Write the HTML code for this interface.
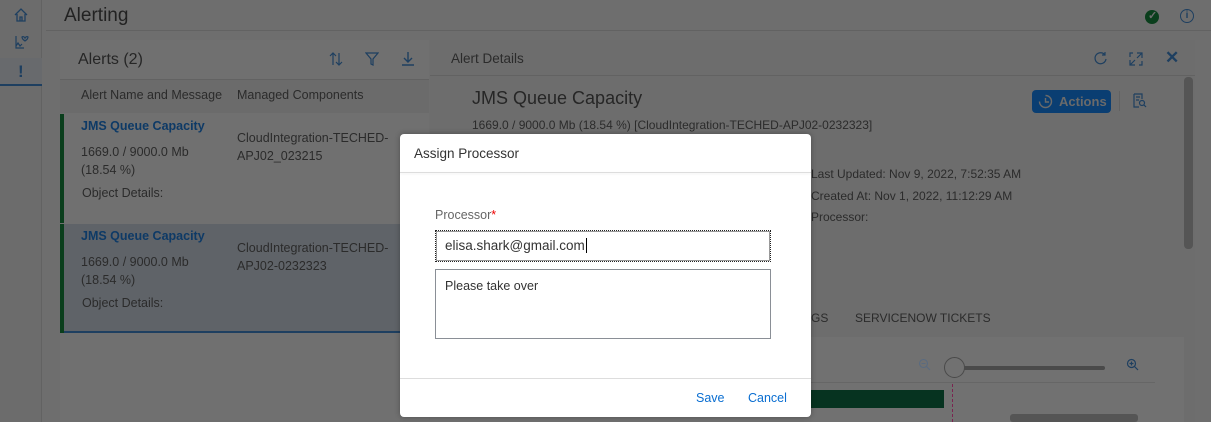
<!DOCTYPE html>
<html><head><meta charset="utf-8"><style>
*{box-sizing:border-box;margin:0;padding:0}
body{width:1211px;height:422px;overflow:hidden;background:#6e6e6e;font-family:"Liberation Sans",sans-serif;color:#2b2b2b;position:relative;font-size:12.5px}
.a{position:absolute}
.link{color:#0e3a66;font-weight:bold;font-size:12.5px}
</style></head><body>
<div class="a" style="left:0;top:0;width:42px;height:422px;background:#6c6c6c;border-right:1px solid #626262"></div>
<div class="a" style="left:0;top:58px;width:42px;height:28px;background:#686a6d;border-bottom:2px solid #1e3f60"></div>
<svg class="a" style="left:13px;top:7px" width="16" height="16" viewBox="0 0 16 16"><path d="M2 8 L8 2 L14 8 M4 7 V14 H12 V7 M7 14 V10 H9 V14" fill="none" stroke="#1e3f60" stroke-width="1.3"/></svg>
<svg class="a" style="left:13px;top:34px" width="16" height="16" viewBox="0 0 16 16"><path d="M3 2 V14 H11 M3 12 L5 9 L7 12 L9 10 M9 3 a2 2 0 0 1 3 1 a2 2 0 0 1 3 -1 c0 2 -3 4 -3 4 c0 0 -3 -2 -3 -4z" fill="none" stroke="#1e3f60" stroke-width="1.2"/></svg>
<div class="a" style="left:18px;top:62px;color:#1e3f60;font-size:17px;font-weight:bold">!</div>
<div class="a" style="left:64px;top:5px;font-size:19px;color:#222">Alerting</div>
<div class="a" style="left:46px;top:30px;width:1165px;height:1px;background:#626262"></div>
<div class="a" style="left:1145px;top:10px;width:14px;height:14px;border-radius:50%;background:#0a3e1c"></div>
<div class="a" style="left:1148px;top:9px;color:#6e6e6e;font-size:11px;font-weight:bold">✓</div>
<div class="a" style="left:1180px;top:9px;width:14px;height:14px;border-radius:50%;border:1.5px solid #1e3f60;color:#1e3f60;font-size:10px;text-align:center;line-height:11px;font-weight:bold">i</div>
<div class="a" style="left:60px;top:40px;width:369px;height:380px;background:#707070"></div>
<div class="a" style="left:78px;top:51px;font-size:16px;color:#262626">Alerts (2)</div>
<svg class="a" style="left:328px;top:51px" width="16" height="16" viewBox="0 0 16 16"><path d="M5 14 V2 M2 5 L5 2 L8 5 M11 2 V14 M8 11 L11 14 L14 11" fill="none" stroke="#1e3f60" stroke-width="1.2"/></svg>
<svg class="a" style="left:365px;top:52px" width="14" height="14" viewBox="0 0 14 14"><path d="M1 1 H13 L8 7 V13 L6 12 V7 Z" fill="none" stroke="#1e3f60" stroke-width="1.2"/></svg>
<svg class="a" style="left:401px;top:51px" width="14" height="16" viewBox="0 0 14 16"><path d="M7 1 V11 M3 7 L7 11 L11 7 M1 14 H13" fill="none" stroke="#1e3f60" stroke-width="1.4"/></svg>
<div class="a" style="left:60px;top:79px;width:369px;height:1px;background:#626262"></div>
<div class="a" style="left:60px;top:80px;width:369px;height:33px;background:#6b6b6b"></div>
<div class="a" style="left:81px;top:88px">Alert Name and Message</div>
<div class="a" style="left:237px;top:88px">Managed Components</div>
<div class="a" style="left:60px;top:114px;width:4px;height:109px;background:#0a3e1c"></div>
<div class="a link" style="left:81px;top:119px">JMS Queue Capacity</div>
<div class="a" style="left:81px;top:143px;line-height:18px">1669.0 / 9000.0 Mb<br>(18.54 %)</div>
<div class="a" style="left:82px;top:186px">Object Details:</div>
<div class="a" style="left:237px;top:129px;line-height:18px">CloudIntegration-TECHED-<br>APJ02_023215</div>
<div class="a" style="left:60px;top:224px;width:369px;height:109px;background:#5f6368;border-bottom:2px solid #1e3f60"></div>
<div class="a" style="left:60px;top:224px;width:4px;height:109px;background:#0a3e1c"></div>
<div class="a link" style="left:81px;top:229px">JMS Queue Capacity</div>
<div class="a" style="left:81px;top:253px;line-height:18px">1669.0 / 9000.0 Mb<br>(18.54 %)</div>
<div class="a" style="left:82px;top:296px">Object Details:</div>
<div class="a" style="left:237px;top:239px;line-height:18px">CloudIntegration-TECHED-<br>APJ02-0232323</div>
<div class="a" style="left:430px;top:40px;width:765px;height:382px;background:#6d6d6d"></div>
<div class="a" style="left:451px;top:51px;font-size:13.5px">Alert Details</div>
<svg class="a" style="left:1093px;top:51px" width="15" height="15" viewBox="0 0 15 15"><path d="M12 4 A5.5 5.5 0 1 0 13 8 M12 1 V4 H9" fill="none" stroke="#1e3f60" stroke-width="1.2"/></svg>
<svg class="a" style="left:1129px;top:52px" width="14" height="14" viewBox="0 0 14 14"><path d="M8 1 H13 V6 M13 1 L8 6 M6 13 H1 V8 M1 13 L6 8 M1 5 V1 H4 M13 9 V13 H10" fill="none" stroke="#1e3f60" stroke-width="1.2"/></svg>
<div class="a" style="left:1165px;top:48px;color:#1e3f60;font-size:17px;font-weight:bold">✕</div>
<div class="a" style="left:430px;top:75px;width:765px;height:1px;background:#626262"></div>
<div class="a" style="left:472px;top:88px;font-size:18px;color:#262626">JMS Queue Capacity</div>
<div class="a" style="left:472px;top:118px;font-size:12px">1669.0 / 9000.0 Mb (18.54 %) [CloudIntegration-TECHED-APJ02-0232323]</div>
<div class="a" style="left:1032px;top:90px;width:79px;height:23px;background:#0a3e72;border-radius:4px;color:#6a6a6a;font-weight:bold;font-size:13px;line-height:23px;padding-left:27px">Actions</div>
<svg class="a" style="left:1038px;top:94px" width="15" height="15" viewBox="0 0 15 15"><path d="M7.5 1.5 A6 6 0 1 1 1.5 7.5 M7.5 4 V8 H11" fill="none" stroke="#6a6a6a" stroke-width="1.4"/></svg>
<div class="a" style="left:1119px;top:91px;width:1px;height:20px;background:#626262"></div>
<svg class="a" style="left:1133px;top:93px" width="14" height="16" viewBox="0 0 14 16"><path d="M1 1 H9 V6 M1 1 V14 H6 M3 4 H7 M3 7 H6" fill="none" stroke="#1e3f60" stroke-width="1.2"/><circle cx="9" cy="10" r="2.5" fill="none" stroke="#1e3f60" stroke-width="1.2"/><path d="M11 12 L13 14" stroke="#1e3f60" stroke-width="1.2"/></svg>
<div class="a" style="left:811px;top:164px;line-height:21.5px;font-size:12px">Last Updated: Nov 9, 2022, 7:52:35 AM<br>Created At: Nov 1, 2022, 11:12:29 AM<br>Processor:</div>
<div class="a" style="left:811px;top:311px;font-size:12px">GS</div>
<div class="a" style="left:855px;top:311px;font-size:12px">SERVICENOW TICKETS</div>
<div class="a" style="left:430px;top:337px;width:754px;height:85px;background:#717171"></div>
<svg class="a" style="left:918px;top:358px" width="14" height="14" viewBox="0 0 14 14"><circle cx="5.5" cy="5.5" r="4" fill="none" stroke="#5a6b80" stroke-width="1.1"/><path d="M3.5 5.5 H7.5 M8.5 8.5 L12 12" stroke="#5a6b80" stroke-width="1.1"/></svg>
<div class="a" style="left:955px;top:366px;width:150px;height:4px;background:#4a4a4a;border-radius:2px"></div>
<div class="a" style="left:944px;top:357px;width:21px;height:21px;border-radius:50%;border:1.5px solid #4a4a4a;background:#717171"></div>
<svg class="a" style="left:1126px;top:358px" width="14" height="14" viewBox="0 0 14 14"><circle cx="5.5" cy="5.5" r="4" fill="none" stroke="#1e3f60" stroke-width="1.2"/><path d="M3.5 5.5 H7.5 M5.5 3.5 V7.5 M8.5 8.5 L12 12" stroke="#1e3f60" stroke-width="1.2"/></svg>
<div class="a" style="left:800px;top:382px;width:355px;height:1px;background:#666"></div>
<div class="a" style="left:811px;top:390px;width:133px;height:18px;background:#063320"></div>
<div class="a" style="left:952px;top:384px;width:1px;height:38px;border-left:1px dashed #7a2450"></div>
<div class="a" style="left:1010px;top:414px;width:128px;height:8px;background:#555;border-radius:3px"></div>
<div class="a" style="left:1184px;top:77px;width:9px;height:172px;background:#555;border-radius:4px"></div>
<div class="a" style="left:400px;top:134px;width:411px;height:283px;background:#fff;border-radius:4px;box-shadow:0 0 6px rgba(0,0,0,.3)"></div>
<div class="a" style="left:414px;top:146px;font-size:13.5px;color:#333">Assign Processor</div>
<div class="a" style="left:400px;top:172px;width:411px;height:1px;background:#ddd;box-shadow:0 1px 2px rgba(0,0,0,.08)"></div>
<div class="a" style="left:435px;top:208px;font-size:12.5px;color:#666">Processor<span style="color:#e00">*</span></div>
<div class="a" style="left:435px;top:230px;width:336px;height:32px;border:1px dotted #222;outline:1px solid #999;outline-offset:-2px;padding:7px 9px;font-size:13.5px;color:#333">elisa.shark@gmail.com<span style="border-left:1px solid #000;margin-left:1px"></span></div>
<div class="a" style="left:435px;top:269px;width:336px;height:70px;border:1px solid #8a8f96;padding:9px;font-size:12.5px;color:#333">Please take over</div>
<div class="a" style="left:400px;top:378px;width:411px;height:1px;background:#ddd"></div>
<div class="a" style="left:696px;top:391px;color:#0a6ed1;font-size:12.5px">Save</div>
<div class="a" style="left:748px;top:391px;color:#0a6ed1;font-size:12.5px">Cancel</div>
</body></html>
